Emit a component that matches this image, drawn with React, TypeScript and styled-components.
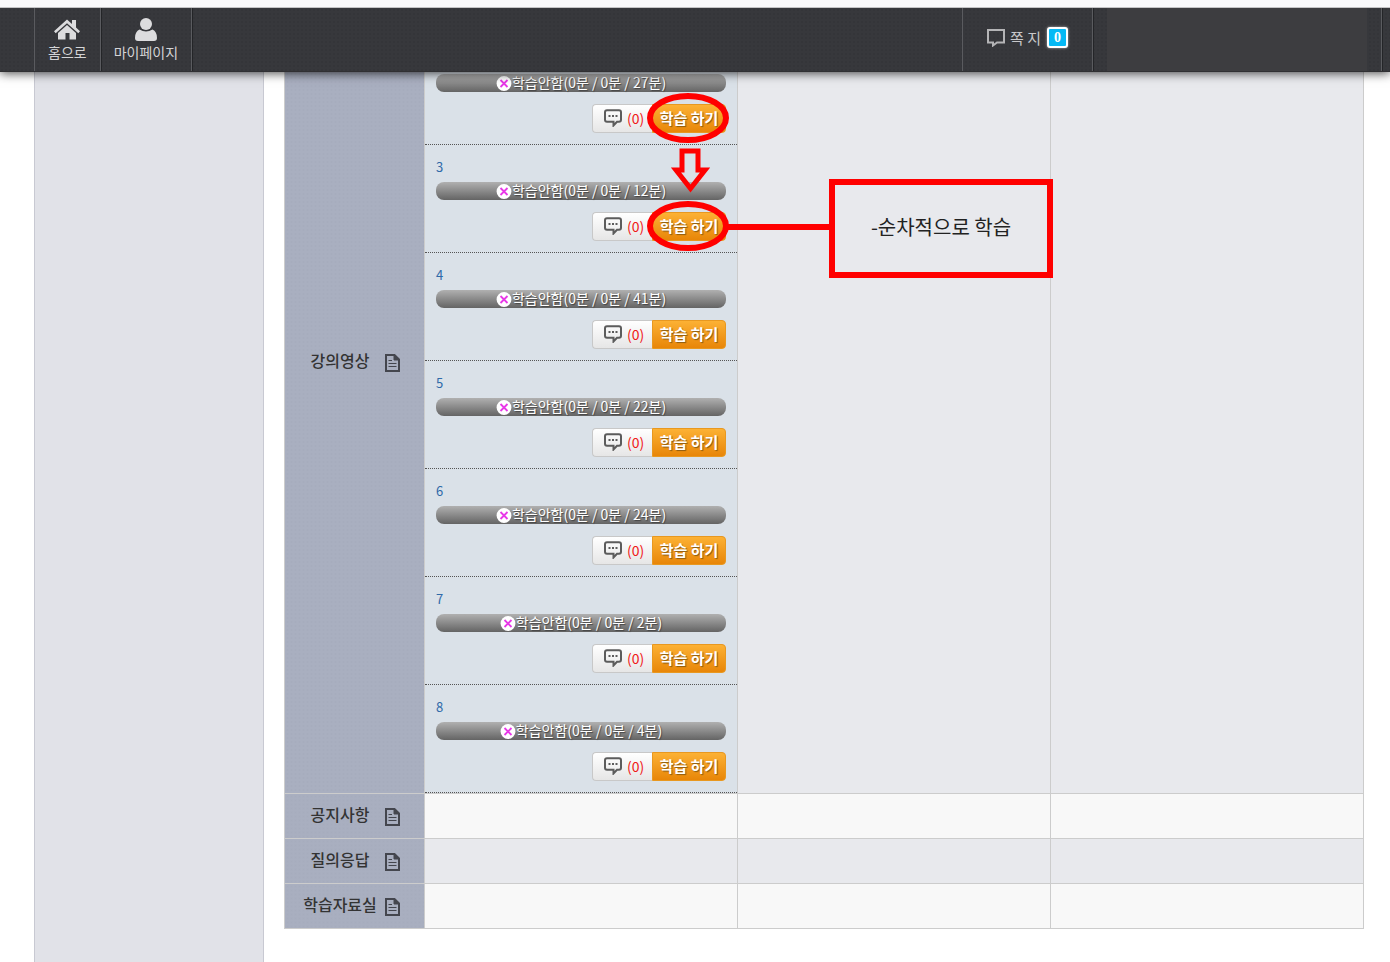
import React from 'react';
import styled, { createGlobalStyle, css } from 'styled-components';

const GlobalStyle = createGlobalStyle`
  *, *::before, *::after { box-sizing: border-box; }
  body {
    margin: 0;
    background: #fff;
    color: #333;
    font-family: "Noto Sans CJK KR", "Noto Sans", sans-serif;
    font-size: 14px;
    line-height: 20px;
  }
  #root { min-height: 100vh; display: flex; flex-direction: column; }
  button { font: inherit; margin: 0; cursor: pointer; }
  a { text-decoration: none; color: inherit; }
  svg { display: block; flex: none; }
`;

const TopStrip = styled.div`
  position: relative;
  z-index: 3;
  height: 8px;
  background: #f9f9fb;
  border-bottom: 1px solid #c4c4c6;
`;

const Header = styled.header`
  position: relative;
  z-index: 2;
  display: flex;
  height: 64px;
  background-color: #37383c;
  background-image: radial-gradient(#343539 1px, transparent 1px);
  background-size: 4px 4px;
  border-bottom: 1px solid #303033;
  box-shadow: 0 1px 10px rgba(0, 0, 0, 0.75);
`;

const HeaderNav = styled.nav`
  display: flex;
  flex: 1;
  margin-left: 34px;
  border-left: 1px solid #5a5b5f;
`;

const divider = css`
  border-right: 1px solid #5a5b5f;
  box-shadow: 1px 0 0 #242528;
`;

const NavLink = styled.a`
  ${divider}
  display: flex;
  flex-direction: column;
  align-items: center;
  padding: 9px 13px 0;
  color: #d4d4d6;
`;

const NavIcon = styled.svg`
  width: 26px;
  height: 25px;
  fill: #dcdcde;
`;

const MessageLink = styled.a`
  ${divider}
  display: flex;
  align-items: center;
  width: 131px;
  padding: 0 0 4px 24px;
  border-left: 1px solid #5a5b5f;
  color: #c8c8ca;
  font-size: 15px;
`;

const MessageText = styled.span`
  margin: 0 6px 0 5px;
`;

const Badge = styled.span`
  width: 21px;
  height: 21px;
  border: 2px solid #fff;
  border-radius: 3px;
  background: #05b9f5;
  box-shadow: 0 0 3px rgba(255, 255, 255, 0.6);
  color: #fff;
  font: bold 14px/17px "Liberation Serif", serif;
  text-align: center;
`;

const UserPanel = styled.div`
  ${divider}
  width: 289px;
  padding: 0 14px;
`;

const UserPanelFill = styled.div`
  height: 100%;
  background: #3d3d40;
`;

const HeaderEnd = styled.div`
  width: 8px;
`;

const Page = styled.div`
  display: flex;
  flex: 1;
  gap: 20px;
  padding: 0 26px 0 34px;
`;

const Sidebar = styled.aside`
  flex: none;
  width: 230px;
  background: #e1e2e8;
  border: solid #c8c9d2;
  border-width: 0 1px;
`;

const Main = styled.main`
  flex: 1;
  min-width: 0;
  padding-bottom: 34px;
`;

const CourseTable = styled.table`
  width: 100%;
  table-layout: fixed;
  border-collapse: collapse;
  border: 1px solid #ccc;
  border-top: 0;
`;

const RowHead = styled.th<{ $tall?: boolean }>`
  width: 140px;
  padding: ${p => (p.$tall ? '278px 6px 0 0' : '0 6px 2px 0')};
  vertical-align: ${p => (p.$tall ? 'top' : 'middle')};
  border: 1px solid #ccc;
  border-top-width: ${p => (p.$tall ? 0 : 1)}px;
  background-color: #a9afc0;
  background-image: radial-gradient(#a6acbd 1px, transparent 1px);
  background-size: 4px 4px;
  font-size: 16px;
  font-weight: 500;
`;

const RowLabel = styled.div`
  display: flex;
  align-items: flex-end;
  justify-content: center;
  gap: 8px;
`;

const RowName = styled.span`
  width: 74px;
  padding-bottom: 2px;
  text-align: center;
`;

const Cell = styled.td<{ $shade?: boolean; $tall?: boolean }>`
  height: ${p => (p.$tall ? 'auto' : '45px')};
  padding: 0;
  vertical-align: top;
  border: 1px solid #ccc;
  border-top-width: ${p => (p.$tall ? 0 : 1)}px;
  background: ${p => (p.$shade ? '#e8e9ed' : '#f8f8f8')};
`;

const Lesson = styled.section<{ $cut?: boolean }>`
  padding: ${p => (p.$cut ? 2 : 12)}px 11px 11px;
  border-bottom: 1px dotted #555;
  background: #dae1e8;
`;

const LessonNumber = styled.a`
  display: block;
  margin-bottom: 5px;
  color: #2f6aa8;
  font-size: 13px;
`;

const Status = styled.div`
  display: flex;
  align-items: center;
  justify-content: center;
  height: 18px;
  border-radius: 8px;
  background: linear-gradient(#b0b0b0, #646464);
  color: #fff;
  line-height: 16px;
  white-space: nowrap;
  text-shadow: 1px 1px 1px #444;
`;

const StatusText = styled.span`
  padding-bottom: 2px;
`;

const Actions = styled.div`
  position: relative;
  display: flex;
  width: 134px;
  height: 29px;
  margin: 12px 0 0 auto;
`;

const CommentButton = styled.button`
  display: flex;
  align-items: center;
  gap: 5px;
  width: 60px;
  padding: 0 0 2px 11px;
  border: 1px solid #c8c8c8;
  border-right: 0;
  border-radius: 4px 0 0 4px;
  background: linear-gradient(#fff, #e6e6e6);
  color: #f01818;
`;

const StudyButton = styled.button`
  width: 74px;
  padding: 0 0 2px;
  border: 1px solid #e89820;
  border-radius: 0 4px 4px 0;
  background: linear-gradient(#fcb134, #e88608);
  color: #fff;
  font-size: 15px;
  font-weight: bold;
  text-shadow: 1px 1px 1px #8a5a10;
`;

const Ring = styled.svg`
  position: absolute;
  z-index: 1;
  right: -4px;
  top: -14px;
  fill: none;
  stroke: #f00;
  stroke-width: 6px;
  pointer-events: none;
`;

const Arrow = styled.svg`
  position: absolute;
  z-index: 1;
  right: 16px;
  bottom: 48px;
  fill: none;
  stroke: #f00;
  stroke-width: 5px;
`;

const Connector = styled.div`
  position: absolute;
  z-index: 1;
  left: 100%;
  top: 12px;
  width: 103px;
  height: 6px;
  background: #f00;
`;

const Callout = styled.div`
  position: absolute;
  z-index: 1;
  left: 237px;
  top: -33px;
  display: flex;
  align-items: center;
  justify-content: center;
  width: 224px;
  height: 99px;
  padding-bottom: 3px;
  border: 6px solid #f00;
  background: #e8e9ed;
  color: #222;
  font-size: 20px;
`;

const DocumentIcon = () => (
  <svg width="15" height="18" viewBox="0 0 15 18" fill="none" stroke="#44464e" strokeWidth="2" aria-hidden="true">
    <path d="M1 1h8.500L14 5.500V17H1z" />
    <path d="M9 1v5h5z" fill="#44464e" strokeWidth="1" />
    <path d="M3.500 6.500H7M3.500 9.500h8M3.500 12.500h8" strokeWidth="1" />
  </svg>
);

const CommentIcon = () => (
  <svg width="18" height="18" viewBox="0 0 18 18" fill="none" stroke="#5c5c5c" aria-hidden="true">
    <path d="M3 1.200h12q2 0 2 2v7.600q0 2-2 2h-2L9.500 16.500V12.800H3q-2 0-2-2V3.200q0-2 2-2z" strokeWidth="2" />
    <path d="M4.500 7h2M8 7h2M11.500 7h2" strokeWidth="2" />
  </svg>
);

const CrossIcon = () => (
  <svg width="16" height="16" viewBox="0 0 16 16" aria-hidden="true">
    <circle cx="8" cy="8.500" r="7.400" fill="#fff" />
    <path d="M4.500 5l7 7M11.500 5l-7 7" stroke="#e838e8" strokeWidth="1.800" />
  </svg>
);

type LessonInfo = { no: number; minutes: number };

const lessons: LessonInfo[] = [
  { no: 2, minutes: 27 },
  { no: 3, minutes: 12 },
  { no: 4, minutes: 41 },
  { no: 5, minutes: 22 },
  { no: 6, minutes: 24 },
  { no: 7, minutes: 2 },
  { no: 8, minutes: 4 },
];

const boards = [
  { name: '공지사항', shade: false },
  { name: '질의응답', shade: true },
  { name: '학습자료실', shade: false },
];

function LessonBlock({ no, minutes }: LessonInfo) {
  return (
    <Lesson $cut={no === 2}>
      {no > 2 && <LessonNumber href="#">{no}</LessonNumber>}
      <Status>
        <CrossIcon />
        <StatusText>학습안함(0분 / 0분 / {minutes}분)</StatusText>
      </Status>
      <Actions>
        <CommentButton type="button">
          <CommentIcon />
          (0)
        </CommentButton>
        <StudyButton type="button">학습 하기</StudyButton>
        {no <= 3 && (
          <Ring width="84" height="56" viewBox="0 0 84 56" aria-hidden="true">
            <ellipse cx="42" cy="28" rx="38" ry="22" />
          </Ring>
        )}
        {no === 3 && (
          <>
            <Arrow width="40" height="46" viewBox="0 0 40 46" aria-hidden="true">
              <path d="M12 4h16v19h7L20.500 41.500 6 23h6z" />
            </Arrow>
            <Connector />
            <Callout>-순차적으로 학습</Callout>
          </>
        )}
      </Actions>
    </Lesson>
  );
}

export default function App() {
  return (
    <>
      <GlobalStyle />
      <TopStrip />
      <Header>
        <HeaderNav>
          <NavLink href="#">
            <NavIcon viewBox="0 0 26 25" aria-hidden="true">
              <path d="M13 2.500l5 4.500V3h4v7.500l4 3.700-1.700 2L13 6.200 1.700 16.200 0 14.200z" />
              <path d="M13 8l9 8v6.500h-6.500V16h-4v6.500H4V16z" />
            </NavIcon>
            홈으로
          </NavLink>
          <NavLink href="#">
            <NavIcon viewBox="0 0 26 25" aria-hidden="true">
              <circle cx="13" cy="7" r="6" />
              <path d="M6.500 12.500q6.500 4 13 0 4.500 2 4.500 8.500 0 3-3 3H5q-3 0-3-3 0-6.500 4.500-8.500z" />
            </NavIcon>
            마이페이지
          </NavLink>
        </HeaderNav>
        <MessageLink href="#">
          <svg width="18" height="19" viewBox="0 0 18 19" fill="none" stroke="#b4b4b6" strokeWidth="2" aria-hidden="true">
            <path d="M1 2h16v12.500h-7L6 17.500v-3H1z" />
          </svg>
          <MessageText>쪽 지</MessageText>
          <Badge>0</Badge>
        </MessageLink>
        <UserPanel>
          <UserPanelFill />
        </UserPanel>
        <HeaderEnd />
      </Header>
      <Page>
        <Sidebar />
        <Main>
          <CourseTable>
            <tbody>
              <tr>
                <RowHead scope="row" $tall>
                  <RowLabel>
                    <RowName>강의영상</RowName>
                    <DocumentIcon />
                  </RowLabel>
                </RowHead>
                <Cell $tall>
                  {lessons.map(l => (
                    <LessonBlock key={l.no} {...l} />
                  ))}
                </Cell>
                <Cell $tall $shade />
                <Cell $tall $shade />
              </tr>
              {boards.map(b => (
                <tr key={b.name}>
                  <RowHead scope="row">
                    <RowLabel>
                      <RowName>{b.name}</RowName>
                      <DocumentIcon />
                    </RowLabel>
                  </RowHead>
                  <Cell $shade={b.shade} />
                  <Cell $shade={b.shade} />
                  <Cell $shade={b.shade} />
                </tr>
              ))}
            </tbody>
          </CourseTable>
        </Main>
      </Page>
    </>
  );
}
